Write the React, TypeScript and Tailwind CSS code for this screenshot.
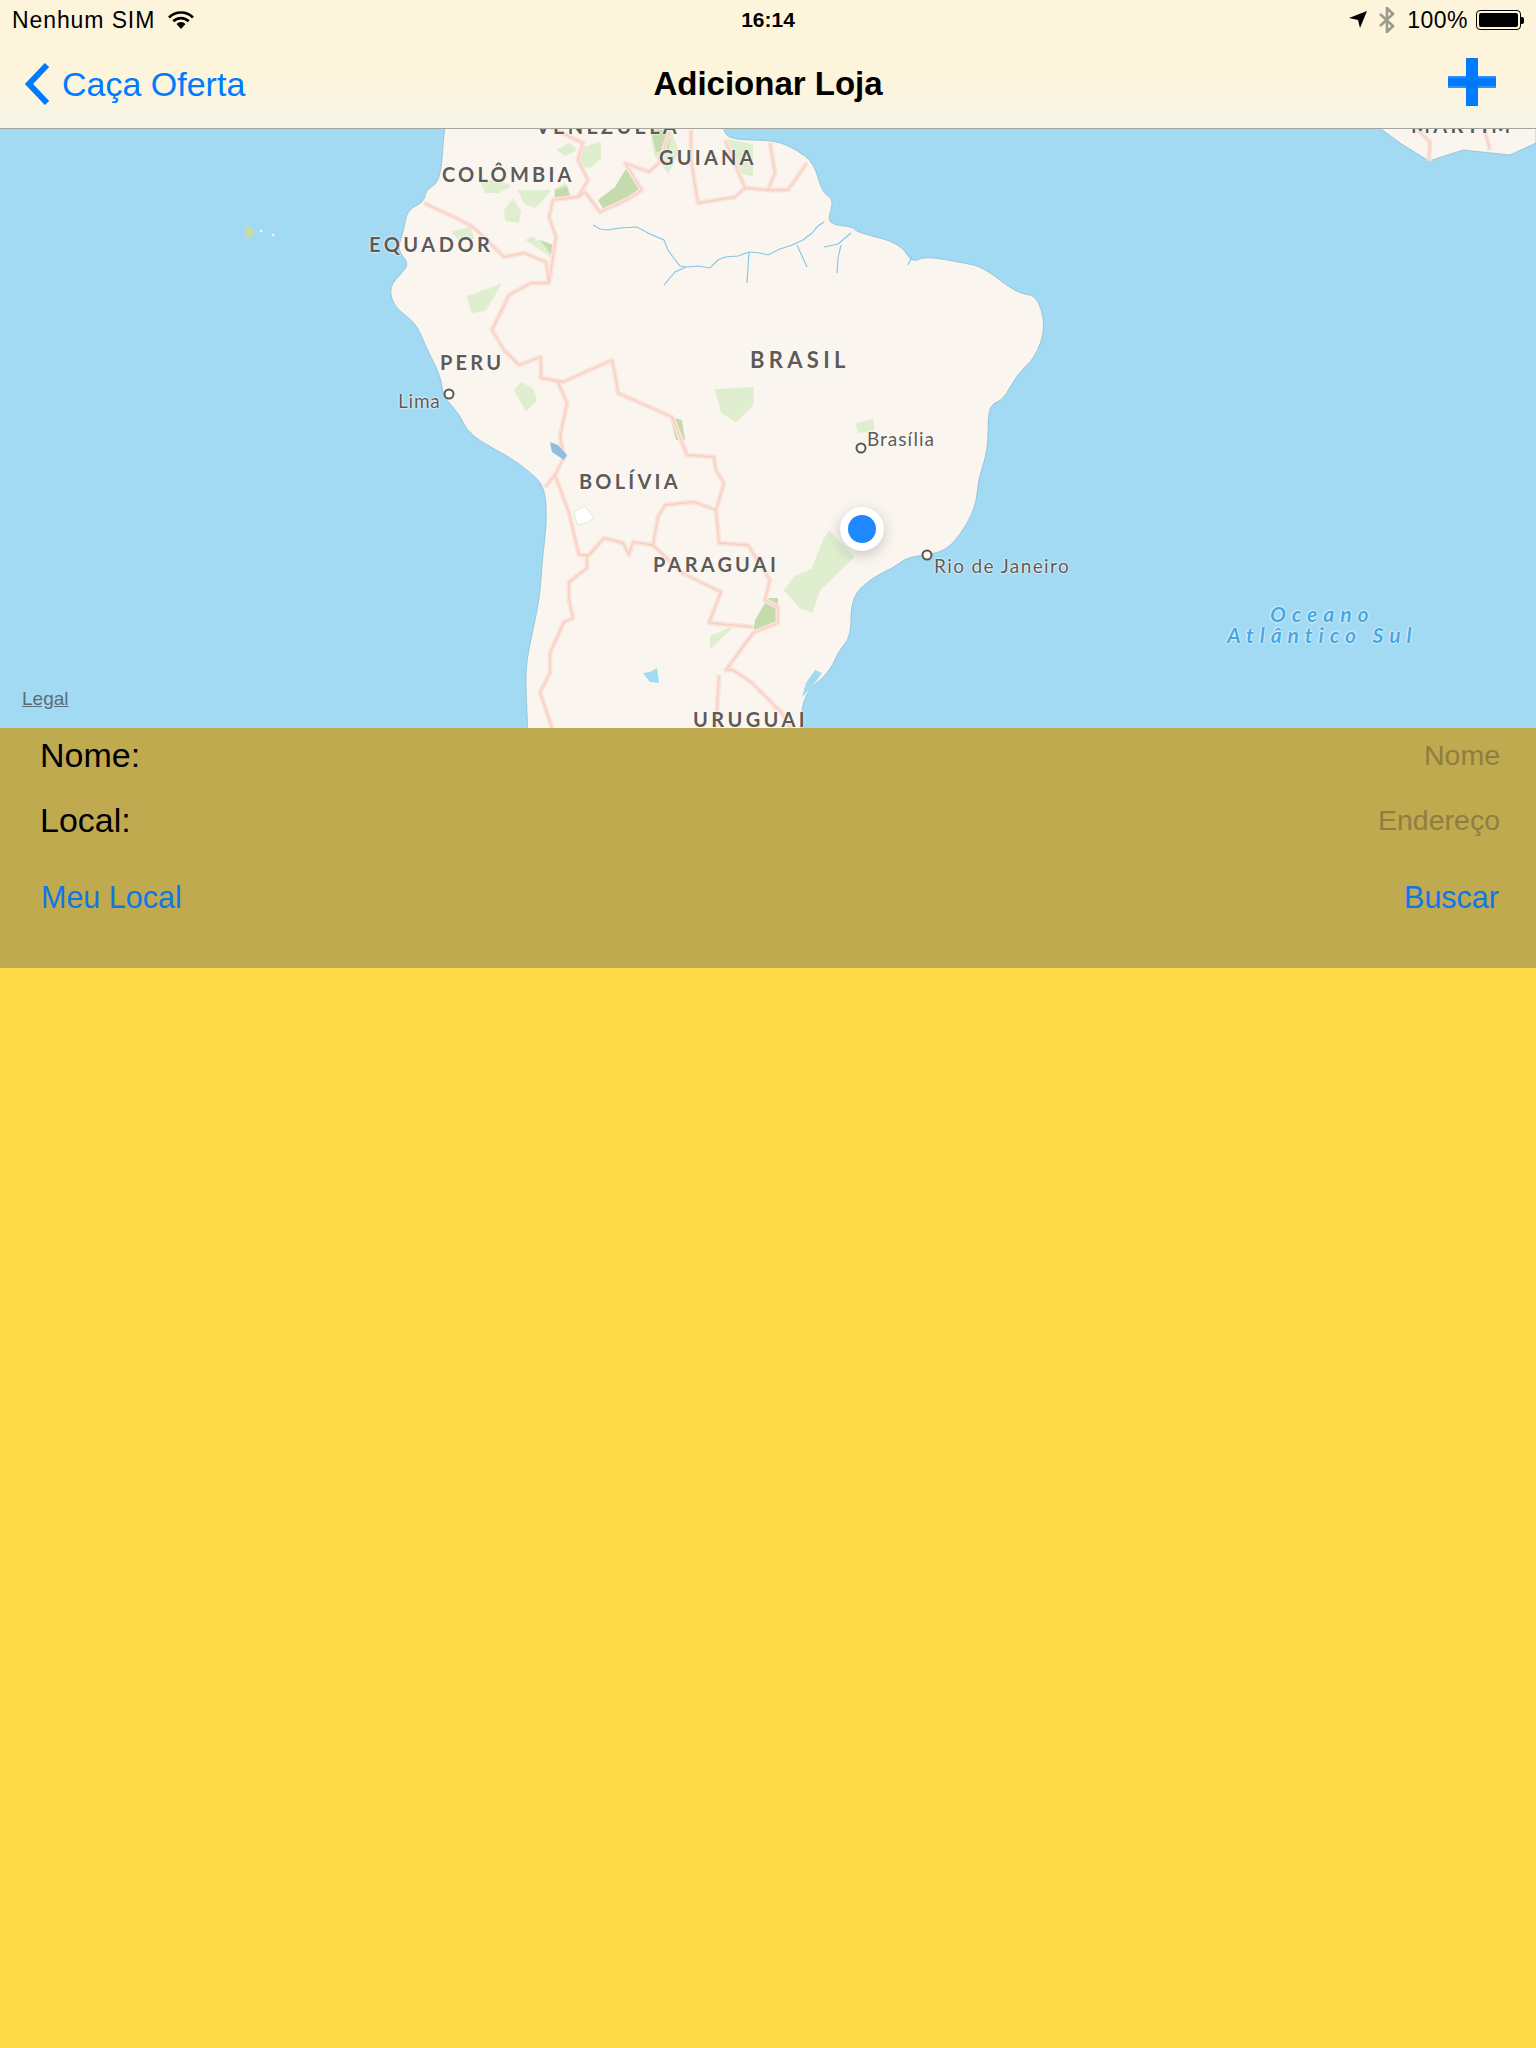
import type { ReactNode } from "react";

const sans = "font-['Liberation_Sans',Arial,sans-serif]";

const landPoints: [number, number][] = [
  [447, 100], [445, 128], [443, 143], [442, 163], [438, 183], [426, 190], [424, 202], [407, 210], [404, 230], [397, 250],
  [409, 263], [402, 273], [389, 287], [394, 307], [416, 323], [426, 347], [441, 377], [443, 397], [459, 413],
  [469, 435], [511, 458], [530, 472], [545, 487], [547, 523], [542, 560], [540, 597], [530, 643], [525, 673],
  [528, 728], [527, 780], [796, 780], [800, 728], [804, 693], [829, 673], [839, 650], [851, 637], [851, 597], [873, 577], [895, 567],
  [907, 557], [942, 553], [959, 537], [976, 507], [978, 480], [988, 450], [988, 413], [993, 403], [1003, 400],
  [1018, 373], [1035, 358], [1046, 327], [1037, 295], [1018, 294], [983, 267], [964, 263], [925, 256], [912, 263],
  [900, 243], [856, 232], [854, 227], [827, 224], [832, 207], [832, 198], [822, 192], [814, 163], [797, 150],
  [775, 140], [730, 140], [722, 128], [718, 100],
];

// suaviza o contorno da costa
function smoothPath(points: [number, number][]) {
  const mid = (a: [number, number], b: [number, number]) => `${(a[0] + b[0]) / 2},${(a[1] + b[1]) / 2}`;
  let d = `M${mid(points[points.length - 1], points[0])}`;
  points.forEach((p, i) => {
    d += ` Q${p[0]},${p[1]} ${mid(p, points[(i + 1) % points.length])}`;
  });
  return d + " Z";
}

function MapLabel({ className, children }: { className: string; children: ReactNode }) {
  return (
    <span
      className={`absolute whitespace-nowrap leading-none font-['Lato',sans-serif] text-[#5d5a57] [text-shadow:0_0_2px_#fff,0_0_2px_#fff] ${className}`}
    >
      {children}
    </span>
  );
}

function CityDot({ cx, cy }: { cx: number; cy: number }) {
  return <circle cx={cx} cy={cy} r="4.5" fill="#fdfaf5" stroke="#5a5754" strokeWidth="2" />;
}

function MapDrawing() {
  const borders = [
    "M424,203 L456,218 L473,227 L490,243 L504,257 L524,253 L546,262 L549,283 L531,283 L509,295 L492,330 L504,350 L519,365 L541,357 L541,378 L563,382 L612,360 L616,380 L618,393 L672,417 L687,455 L714,457 L716,470 L724,483 L716,510 L719,543 L748,545 L770,580 L765,600 L778,607 L778,623 L753,633 L726,670 L733,670 L751,682 L782,713 L790,728",
    "M557,380 L567,403 L560,437 L564,457 L555,475 L545,487 M555,475 L569,513 L579,555 L589,555 L604,538 L623,543 L629,555 L633,542 L653,545 L658,517 L665,505 L694,502 L716,510",
    "M653,545 L682,573 L721,592 L709,623 L753,627",
    "M587,555 L587,568 L569,582 L569,600 L573,618 L564,622 L550,653 L550,673 L540,692 L552,728",
    "M719,675 L716,727",
    "M551,128 L583,143 L578,160 L588,180 L578,197 L553,200 L549,217 L556,237 L549,283",
    "M578,197 L585,192 L600,212 L627,200 L642,190 L625,163 L649,172 L659,163 L671,128",
    "M691,130 L691,160 L698,203 L735,197 L745,188 L768,190 L788,190 L807,163 M725,140 L745,188 M770,143 L775,173 L768,190",
    "M1429,161 L1430,142 L1416,128 M1490,150 L1484,128",
  ];
  return (
    <svg viewBox="0 129 1536 599" className="absolute inset-0 h-full w-full">
      <rect x="0" y="128" width="1536" height="600" fill="#a2daf3" />
      <path d={smoothPath(landPoints)} fill="#faf5ee" stroke="#8cbfd6" strokeWidth="0.8" />
      <path d="M1380,128 L1400,143 L1429,161 L1463,150 L1510,155 L1536,143 L1536,128 Z" fill="#faf5ee" stroke="#8cbfd6" strokeWidth="0.8" />
      <path d="M245,224 L250,228 L255,232 L252,237 L246,237 Z" fill="#c9dca8" />
      <circle cx="261" cy="231" r="1.5" fill="#f4f4e8" />
      <circle cx="273" cy="235" r="1.5" fill="#f4f4e8" />
      {/* florestas */}
      <g fill="#dfeecf" stroke="#dfeecf" strokeWidth="2" strokeLinejoin="round">
        <path d="M578,150 L600,143 L600,158 L590,167 L580,165 Z" />
        <path d="M558,150 L570,144 L575,150 L565,155 Z" />
        <path d="M651,130 L670,130 L678,152 L668,172 L655,155 Z" />
        <path d="M727,140 L752,145 L752,175 L738,172 Z" />
        <path d="M482,183 L495,180 L510,186 L498,192 L486,192 Z" />
        <path d="M519,191 L550,191 L535,207 L525,203 Z" />
        <path d="M505,210 L513,200 L520,212 L518,222 L506,220 Z" />
        <path d="M555,190 L565,184 L571,198 L555,200 Z" />
        <path d="M453,232 L470,228 L473,238 L460,240 Z" />
        <path d="M527,240 L532,238 L556,250 L554,258 Z" />
        <path d="M468,297 L500,285 L485,310 L472,312 Z" />
        <path d="M515,390 L522,383 L533,390 L536,400 L526,410 Z" />
        <path d="M716,390 L753,388 L752,405 L736,421 L722,412 Z" />
        <path d="M856,424 L873,420 L873,430 L860,432 Z" />
        <path d="M829,532 L853,557 L819,590 L812,612 L800,607 L785,590 L795,577 L812,570 L824,540 Z" />
        <path d="M731,628 L711,647 L711,637 Z" />
      </g>
      <g fill="#c5dbae">
        <path d="M627,167 L642,190 L605,212 L598,200 L615,187 Z" />
        <path d="M670,417 L682,420 L685,440 L676,440 Z" />
        <path d="M768,598 L778,598 L778,623 L753,635 L755,620 Z" />
        <path d="M651,130 L672,130 L668,150 L656,152 Z" />
        <path d="M555,190 L567,186 L570,198 L555,200 Z" />
        <path d="M540,240 L556,246 L554,258 Z" />
      </g>
      {/* fronteiras */}
      <g fill="none" strokeLinejoin="round">
        {borders.map((d) => (
          <path key={d} d={d} stroke="#fbe3da" strokeWidth="5" />
        ))}
        {borders.map((d) => (
          <path key={d + "i"} d={d} stroke="#f6cfc4" strokeWidth="1.3" />
        ))}
      </g>
      {/* rios e lagos */}
      <g fill="none" stroke="#84c5e3" strokeWidth="1.1">
        <path d="M593,225 L600,229 L607,230 L620,228 L637,227 L650,234 L664,240 L668,250 L673,257 L680,266 L686,267 L698,266 L710,268 L718,260 L725,257 L738,256 L749,252 L760,253 L768,255 L780,249 L792,245 L803,240 L812,233 L818,226 L824,222" />
        <path d="M686,267 L675,272 L664,285 M749,252 L748,268 L747,283 M797,245 L802,256 L807,267 M841,245 L838,258 L837,273 M824,247 L838,244 L851,233 M912,257 L908,265" />
      </g>
      <path d="M550,442 L558,445 L567,455 L564,460 L552,452 Z" fill="#8fbfdc" />
      <path d="M574,512 L585,506 L594,518 L586,523 L577,525 Z" fill="#ffffff" stroke="#dfe8e4" strokeWidth="1" />
      <path d="M643,673 L650,672 L657,668 L659,683 L650,682 Z" fill="#a2daf3" />
      <path d="M815,670 L822,673 L812,687 L802,697 L806,683 Z" fill="#a2daf3" />
      <CityDot cx={449} cy={394} />
      <CityDot cx={861} cy={448} />
      <CityDot cx={927} cy={555} />
    </svg>
  );
}

export default function App() {
  return (
    <div className={`flex h-[2048px] flex-col bg-[#ffda47] ${sans}`}>
      <header className="h-[129px] shrink-0 border-b border-[#a3a69c] bg-gradient-to-b from-[#fdf4dc] from-60% to-[#f6f5e6]">
        <div className="grid h-[40px] grid-cols-3 items-center px-3 text-[23px] text-black">
          <div className="flex items-center gap-[13px]">
            <span className="tracking-[0.9px]">Nenhum SIM</span>
            <svg viewBox="0 0 26 18" className="h-[18px] w-[26px]">
              <path d="M1,6.5 A17,17 0 0 1 25,6.5" fill="none" stroke="#000" strokeWidth="2.6" />
              <path d="M5.3,10.3 A11,11 0 0 1 20.7,10.3" fill="none" stroke="#000" strokeWidth="2.6" />
              <path d="M8.5,13 A6,6 0 0 1 17.5,13 L13,18 Z" fill="#000" />
            </svg>
          </div>
          <div className="text-center text-[21px] font-bold">16:14</div>
          <div className="flex items-center justify-end gap-[12px]">
            <svg viewBox="0 0 18 18" className="h-[18px] w-[18px]">
              <path d="M0,7 L18,0 L11,17 L9,9 Z" fill="#000" />
            </svg>
            <svg viewBox="0 0 16 26" className="h-[26px] w-[16px]">
              <path d="M1,7 L14,19 L8,25 L8,1 L14,7 L1,19" fill="none" stroke="#9b9a8c" strokeWidth="2.6" />
            </svg>
            <span className="tracking-[0.5px]">100%</span>
            <div className="-ml-[4px] flex items-center">
              <div className="h-[20px] w-[45px] rounded-[4px] border border-black p-[2px]">
                <div className="h-full w-full rounded-[2px] bg-black" />
              </div>
              <div className="h-[7px] w-[3px] rounded-r-[2px] bg-black" />
            </div>
          </div>
        </div>
        <div className="grid h-[88px] grid-cols-3 items-center text-[34px]">
          <div className="flex items-center gap-[12px] pl-[24px] text-[#007aff]">
            <svg viewBox="0 0 26 44" className="h-[44px] w-[26px]">
              <path d="M23,3 L5,22 L23,41" fill="none" stroke="#007aff" strokeWidth="6" />
            </svg>
            <span>Caça Oferta</span>
          </div>
          <h1 className="text-center text-[33px] font-bold text-black">Adicionar Loja</h1>
          <div className="flex justify-end pr-[40px]">
            <svg viewBox="0 0 48 48" className="-mt-[4px] h-[48px] w-[48px]">
              <rect x="0" y="18" width="48" height="12" fill="#2f90ff" />
              <rect x="0" y="20" width="48" height="8" fill="#007aff" />
              <rect x="18" y="0" width="12" height="48" fill="#007aff" />
            </svg>
          </div>
        </div>
      </header>

      <section className="relative h-[599px] shrink-0 overflow-hidden">
        <MapDrawing />
        <MapLabel className="left-[536px] -top-[13px] text-[20px] font-bold tracking-[3.2px]">VENEZUELA</MapLabel>
        <MapLabel className="left-[1411px] -top-[14px] text-[20px] font-bold tracking-[3.4px]">MARTIM</MapLabel>
        <MapLabel className="left-[442px] top-[35px] text-[20px] font-bold tracking-[3.2px]">COLÔMBIA</MapLabel>
        <MapLabel className="left-[659px] top-[18px] text-[20px] font-bold tracking-[3.2px]">GUIANA</MapLabel>
        <MapLabel className="left-[369px] top-[105px] text-[20px] font-bold tracking-[3.5px]">EQUADOR</MapLabel>
        <MapLabel className="left-[440px] top-[223px] text-[20px] font-bold tracking-[3.2px]">PERU</MapLabel>
        <MapLabel className="left-[750px] top-[220px] text-[22px] font-bold tracking-[4.3px]">BRASIL</MapLabel>
        <MapLabel className="left-[579px] top-[342px] text-[20px] font-bold tracking-[3.2px]">BOLÍVIA</MapLabel>
        <MapLabel className="left-[653px] top-[425px] text-[20px] font-bold tracking-[3.2px]">PARAGUAI</MapLabel>
        <MapLabel className="left-[693px] top-[580px] text-[20px] font-bold tracking-[3.4px]">URUGUAI</MapLabel>
        <MapLabel className="left-[398px] top-[262px] text-[19px] tracking-[0.8px]">Lima</MapLabel>
        <MapLabel className="left-[867px] top-[300px] text-[19px] tracking-[1px]">Brasília</MapLabel>
        <MapLabel className="left-[934px] top-[427px] text-[19px] tracking-[1.4px]">Rio de Janeiro</MapLabel>
        <MapLabel className="left-[1270px] top-[474px] text-[21px] font-bold italic tracking-[6px] !text-[#45a8e4]">Oceano</MapLabel>
        <MapLabel className="left-[1227px] top-[495px] text-[21px] font-bold italic tracking-[6px] !text-[#45a8e4]">Atlântico Sul</MapLabel>
        <span className="absolute left-[22px] top-[560px] text-[19px] leading-none text-[#5b6d78] underline">Legal</span>
        {/* localização atual */}
        <div className="absolute left-[840px] top-[378px] flex h-[44px] w-[44px] items-center justify-center rounded-full bg-white shadow-[0_4px_14px_rgba(0,0,0,0.2)]">
          <div className="h-[28px] w-[28px] rounded-full bg-[#1e88ff]" />
        </div>
      </section>

      <section className="h-[240px] shrink-0 bg-[#bfaa50] pl-[40px] pr-[36px]">
        <div className="mt-[7px] flex h-[40px] items-center justify-between text-[34px] text-black">
          <span>Nome:</span>
          <span className="text-[28.5px] text-[#8f7e40]">Nome</span>
        </div>
        <div className="mt-[25px] flex h-[40px] items-center justify-between text-[34px] text-black">
          <span>Local:</span>
          <span className="text-[28.5px] text-[#8f7e40]">Endereço</span>
        </div>
        <div className="mt-[38px] flex h-[40px] items-center justify-between text-[30.5px] text-[#0f76e8]">
          <span className="ml-[1px]">Meu Local</span>
          <span className="mr-[1px]">Buscar</span>
        </div>
      </section>
    </div>
  );
}
